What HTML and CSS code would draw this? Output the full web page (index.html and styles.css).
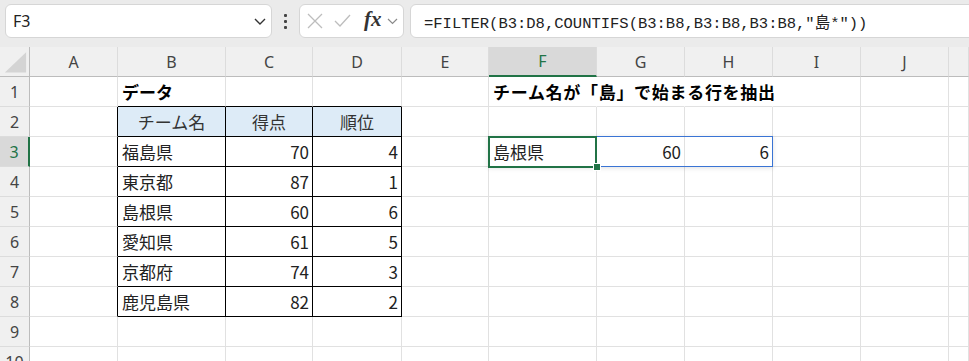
FILE: index.html
```html
<!DOCTYPE html>
<html lang="ja">
<head>
  <meta charset="UTF-8" />
  <title>FILTER + COUNTIFS</title>
  <link rel="stylesheet" href="styles.css">
</head>
<body>

  <!-- formula bar -->
  <div class="bar">
    <div class="namebox">
      <span>F3</span>
      <svg width="14" height="10" viewBox="0 0 14 10"><path d="M2 3 L7 8 L12 3" fill="none" stroke="#333" stroke-width="1.4"/></svg>
    </div>
    <div class="dots"><i></i><i></i><i></i></div>
    <div class="fxbox">
      <svg width="16" height="16" viewBox="0 0 16 16"><path d="M1 1 L15 15 M15 1 L1 15" fill="none" stroke="#bdbdbd" stroke-width="1.3"/></svg>
      <svg width="17" height="14" viewBox="0 0 17 14"><path d="M1 7 L6 12 L16 1" fill="none" stroke="#bdbdbd" stroke-width="1.3"/></svg>
      <span class="fx">fx</span>
      <svg width="11" height="7" viewBox="0 0 11 7"><path d="M1 1 L5.5 5.5 L10 1" fill="none" stroke="#8a8a8a" stroke-width="1.2"/></svg>
    </div>
    <div class="formula">=FILTER(B3:D8,COUNTIFS(B3:B8,B3:B8,B3:B8,"島*"))</div>
  </div>

  <!-- sheet -->
  <div class="sheet">
    <div class="ch corner"><svg width="30" height="29" viewBox="0 0 30 29"><path d="M5 26 L27 26 L27 5 Z" fill="#d4d4d4"/></svg></div>
    <div class="ch">A</div><div class="ch">B</div><div class="ch">C</div><div class="ch">D</div><div class="ch">E</div>
    <div class="ch on">F</div><div class="ch">G</div><div class="ch">H</div><div class="ch">I</div><div class="ch">J</div><div class="ch"></div>

    <div class="rh">1</div>
    <div class="c"></div><div class="c b tt">データ</div><div class="c tt"></div><div class="c tt"></div><div class="c"></div>
    <div class="c b nr title">チーム名が「島」で始まる行を抽出</div><div class="c nr"></div><div class="c nr"></div><div class="c"></div><div class="c"></div><div class="c"></div>

    <div class="rh">2</div>
    <div class="c tl"></div><div class="c tb th">チーム名</div><div class="c tb th">得点</div><div class="c tb th">順位</div><div class="c"></div>
    <div class="c"></div><div class="c"></div><div class="c"></div><div class="c"></div><div class="c"></div><div class="c"></div>

    <div class="rh on">3</div>
    <div class="c tl"></div><div class="c tb">福島県</div><div class="c tb n">70</div><div class="c tb n">4</div><div class="c"></div>
    <div class="c active">島根県<span class="spill"></span><span class="cursor"></span><span class="handle"></span></div>
    <div class="c n">60</div><div class="c n">6</div><div class="c"></div><div class="c"></div><div class="c"></div>

    <div class="rh">4</div>
    <div class="c tl"></div><div class="c tb">東京都</div><div class="c tb n">87</div><div class="c tb n">1</div><div class="c"></div>
    <div class="c"></div><div class="c"></div><div class="c"></div><div class="c"></div><div class="c"></div><div class="c"></div>

    <div class="rh">5</div>
    <div class="c tl"></div><div class="c tb">島根県</div><div class="c tb n">60</div><div class="c tb n">6</div><div class="c"></div>
    <div class="c"></div><div class="c"></div><div class="c"></div><div class="c"></div><div class="c"></div><div class="c"></div>

    <div class="rh">6</div>
    <div class="c tl"></div><div class="c tb">愛知県</div><div class="c tb n">61</div><div class="c tb n">5</div><div class="c"></div>
    <div class="c"></div><div class="c"></div><div class="c"></div><div class="c"></div><div class="c"></div><div class="c"></div>

    <div class="rh">7</div>
    <div class="c tl"></div><div class="c tb">京都府</div><div class="c tb n">74</div><div class="c tb n">3</div><div class="c"></div>
    <div class="c"></div><div class="c"></div><div class="c"></div><div class="c"></div><div class="c"></div><div class="c"></div>

    <div class="rh">8</div>
    <div class="c tl"></div><div class="c tb">鹿児島県</div><div class="c tb n">82</div><div class="c tb n">2</div><div class="c"></div>
    <div class="c"></div><div class="c"></div><div class="c"></div><div class="c"></div><div class="c"></div><div class="c"></div>

    <div class="rh">9</div>
    <div class="c"></div><div class="c"></div><div class="c"></div><div class="c"></div><div class="c"></div>
    <div class="c"></div><div class="c"></div><div class="c"></div><div class="c"></div><div class="c"></div><div class="c"></div>

    <div class="rh">10</div>
    <div class="c"></div><div class="c"></div><div class="c"></div><div class="c"></div><div class="c"></div>
    <div class="c"></div><div class="c"></div><div class="c"></div><div class="c"></div><div class="c"></div><div class="c"></div>
  </div>

</body>
</html>
```

FILE: styles.css
```css
body {
  margin: 0;
  width: 969px;
  height: 361px;
  overflow: hidden;
  background: #fff;
  font-family: "Noto Sans CJK JP", "Noto Sans", sans-serif;
  color: #222;
}

/* formula bar */
.bar {
  display: flex;
  height: 47px;
  box-sizing: border-box;
  padding: 4px 0 0 5px;
  background: #ebebeb;
}

.namebox,
.fxbox,
.formula {
  height: 34px;
  box-sizing: border-box;
  background: #fff;
  border: 1px solid #d6d6d6;
  border-radius: 6px;
  display: flex;
  align-items: center;
}

.namebox {
  width: 267px;
  padding: 0 4px 0 7px;
  justify-content: space-between;
  font-family: "Noto Sans", sans-serif;
  font-size: 16px;
}

.dots {
  width: 27px;
  display: flex;
  flex-direction: column;
  align-items: center;
  justify-content: center;
  gap: 3px;
  height: 34px;
}

.dots i {
  width: 3px;
  height: 3px;
  background: #444;
  border-radius: 1px;
}

.fxbox {
  width: 105px;
  padding: 0 4px 0 7px;
  gap: 11px;
}

.fxbox svg:last-child {
  margin-left: -6px;
}

.fx {
  font-family: "Liberation Serif", serif;
  font-style: italic;
  font-weight: bold;
  font-size: 21px;
  color: #333;
  margin: -3px 0 0 2px;
}

.formula {
  flex: 1;
  margin-left: 6px;
  margin-right: -10px;
  padding-left: 13px;
  font-family: "Liberation Mono", "Noto Sans CJK JP", monospace;
  font-size: 15.5px;
  color: #222;
}

/* sheet */
.sheet {
  display: grid;
  grid-template-columns: 30px 88px 108px 87px 89px 87px 108px 88px 88px 88px 88px 20px;
  grid-template-rows: 30px repeat(10, 30px);
}

.ch {
  background: #f0f0f0;
  border-right: 1px solid #dcdcdc;
  border-bottom: 1px solid #bcbcbc;
  display: flex;
  align-items: center;
  justify-content: center;
  font-family: "Noto Sans", sans-serif;
  font-size: 16px;
  color: #444;
}

.ch.corner {
  border-right-color: #bcbcbc;
  align-items: flex-start;
}

.ch.on {
  background: #d9d9d9;
  color: #217346;
  border-bottom: 2px solid #217346;
}

.rh {
  background: #f0f0f0;
  border-right: 1px solid #bcbcbc;
  border-bottom: 1px solid #dcdcdc;
  display: flex;
  align-items: center;
  justify-content: center;
  font-family: "Noto Sans", sans-serif;
  font-size: 16px;
  color: #444;
}

.rh.on {
  background: #d9d9d9;
  color: #217346;
  border-right: 2px solid #217346;
}

.c {
  border-right: 1px solid #e1e1e1;
  border-bottom: 1px solid #e1e1e1;
  display: flex;
  align-items: center;
  padding: 0 4px;
  white-space: nowrap;
  font-size: 17px;
  color: #222;
  min-width: 0;
}

.n {
  justify-content: flex-end;
  padding-right: 3px;
}

.b {
  font-weight: bold;
  color: #000;
}

.title {
  letter-spacing: 0.7px;
}

.nr {
  border-right-color: transparent;
  overflow: visible;
}

.tb {
  border-right-color: #000;
  border-bottom-color: #000;
}

.tt {
  border-bottom-color: #000;
}

.tl {
  border-right-color: #000;
}

.th {
  background: #ddebf7;
  justify-content: center;
  color: #333;
}

/* F3 selection and spill range */
.active {
  position: relative;
}

.spill {
  position: absolute;
  left: -1px;
  top: -1px;
  width: 285px;
  height: 31px;
  box-sizing: border-box;
  border: 1px solid #3a74d4;
  box-shadow: 0 1px 5px rgba(0, 0, 0, 0.12);
}

.cursor {
  position: absolute;
  left: -1px;
  top: -1px;
  width: 109px;
  height: 32px;
  box-sizing: border-box;
  border: 2px solid #217346;
}

.handle {
  position: absolute;
  left: 104px;
  top: 26px;
  width: 6px;
  height: 6px;
  background: #217346;
  border: 1px solid #fff;
}
```
